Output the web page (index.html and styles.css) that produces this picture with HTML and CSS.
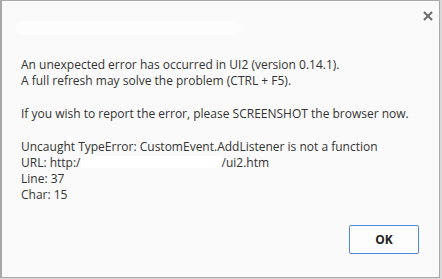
FILE: index.html
```html
<!DOCTYPE html>
<html lang="en">
<head>
    <meta charset="UTF-8">
    <title>Error</title>
    <link rel="stylesheet" href="styles.css">
</head>
<body>
    <div class="dialog">
        <div class="titlebar">
            <span class="title-blur"></span>
            <button class="close-btn" aria-label="Close">
                <svg width="10" height="10" viewBox="0 0 10 10">
                    <path d="M1 1 L9 9 M9 1 L1 9" stroke="#6b6b6b" stroke-width="2"/>
                </svg>
            </button>
        </div>
        <div class="message">
            <p>An unexpected error has occurred in UI2 (version 0.14.1).<br>A full refresh may solve the problem (CTRL + F5).</p>
            <p>If you wish to report the error, please SCREENSHOT the browser now.</p>
            <p>Uncaught TypeError: CustomEvent.AddListener is not a function<br>URL: http:/<span class="redacted"></span>/ui2.htm<br>Line: 37<br>Char: 15</p>
        </div>
        <div class="actions">
            <button class="ok-btn">OK</button>
        </div>
    </div>
</body>
</html>
```

FILE: styles.css
```css
* {
    box-sizing: border-box;
}
body {
    margin: 0;
    background-color: #d9d9d9;
    font-family: "Open Sans", "Noto Sans", sans-serif;
    height: 279px;
    overflow: hidden;
}
.dialog {
    width: 440px;
    height: 278px;
    background-color: #fafafa;
    border: 1px solid #a8a8a8;
    border-left-width: 2px;
    display: flex;
    flex-direction: column;
}
.titlebar {
    height: 56px;
    display: flex;
    align-items: flex-start;
    justify-content: space-between;
    padding: 8px 4px 0 14px;
}
.title-blur {
    width: 225px;
    height: 14px;
    margin-top: 12px;
    background-color: #fdfdfd;
    border-radius: 6px;
}
.close-btn {
    border: none;
    background: none;
    padding: 0;
    width: 14px;
    height: 14px;
    display: flex;
    align-items: center;
    justify-content: center;
}
.message {
    flex: 1;
    padding: 0 19px;
    color: #333;
    font-size: 12px;
    line-height: 16px;
}
.message p {
    margin: 0 0 17px;
}
.redacted {
    display: inline-block;
    width: 141px;
    height: 12px;
    vertical-align: -1px;
    background-color: #fff;
}
.actions {
    display: flex;
    justify-content: flex-end;
    padding: 0 20px 23px;
}
.ok-btn {
    width: 70px;
    height: 29px;
    background-color: #fdfdfd;
    border: 1px solid #4d8ae6;
    border-radius: 2px;
    font-family: inherit;
    font-weight: bold;
    font-size: 12px;
    color: #222;
}
```
